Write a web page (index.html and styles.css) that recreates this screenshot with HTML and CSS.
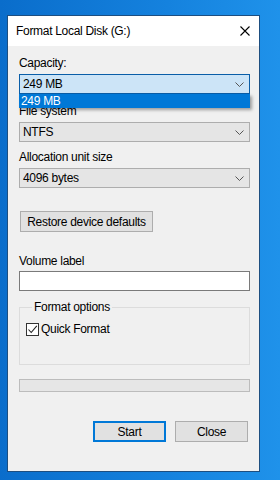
FILE: index.html
```html
<!DOCTYPE html>
<html lang="en">
<head>
    <meta charset="UTF-8">
    <meta name="viewport" content="width=device-width, initial-scale=1.0">
    <title>Format Local Disk (G:)</title>
    <link rel="stylesheet" href="styles.css">
</head>
<body>
    <div class="window">
        <div class="titlebar">
            <span class="title">Format Local Disk (G:)</span>
            <svg class="close" width="10" height="10" viewBox="0 0 10 10">
                <path d="M0.5 0.5 L9.5 9.5 M9.5 0.5 L0.5 9.5" stroke="#000" stroke-width="1.1" fill="none"/>
            </svg>
        </div>

        <div class="content">
            <div class="field capacity">
                <div class="label">Capacity:</div>
                <div class="combo focused">
                    <span>249 MB</span>
                    <svg class="chevron" width="9" height="5" viewBox="0 0 9 5"><path d="M0.5 0.5 L4.5 4.5 L8.5 0.5" stroke="#555" fill="none"/></svg>
                </div>
                <div class="droplist">
                    <div class="option">249 MB</div>
                </div>
            </div>

            <div class="field filesystem">
                <div class="label">File system</div>
                <div class="combo">
                    <span>NTFS</span>
                    <svg class="chevron" width="9" height="5" viewBox="0 0 9 5"><path d="M0.5 0.5 L4.5 4.5 L8.5 0.5" stroke="#555" fill="none"/></svg>
                </div>
            </div>

            <div class="field allocation">
                <div class="label">Allocation unit size</div>
                <div class="combo">
                    <span>4096 bytes</span>
                    <svg class="chevron" width="9" height="5" viewBox="0 0 9 5"><path d="M0.5 0.5 L4.5 4.5 L8.5 0.5" stroke="#555" fill="none"/></svg>
                </div>
            </div>

            <button class="btn restore">Restore device defaults</button>

            <div class="field volume">
                <div class="label">Volume label</div>
                <input class="textbox" type="text">
            </div>

            <fieldset class="options">
                <legend>Format options</legend>
                <label class="check">
                    <span class="box">
                        <svg width="11" height="11" viewBox="0 0 11 11"><path d="M1.5 5.5 L4.2 8.5 L9.8 1.8" stroke="#222" stroke-width="1.1" fill="none"/></svg>
                    </span>
                    Quick Format
                </label>
            </fieldset>

            <div class="progress"></div>

            <div class="actions">
                <button class="btn primary">Start</button>
                <button class="btn">Close</button>
            </div>
        </div>
    </div>
</body>
</html>
```

FILE: styles.css
```css
body {
    margin: 0;
    height: 480px;
    padding: 15px 0 0 7px;
    box-sizing: border-box;
    overflow: hidden;
    background: linear-gradient(90deg, #0a6dcb 0%, #1582de 60%, #1f92ea 100%);
    font-family: "Liberation Sans", Arial, sans-serif;
    font-size: 12px;
    color: #000;
}
.window {
    width: 253px;
    border: 1px solid #1d4e80;
    background-color: #f0f0f0;
    box-sizing: border-box;
}
.titlebar {
    height: 30px;
    background-color: #fff;
    display: flex;
    align-items: center;
    justify-content: space-between;
    padding: 0 9px 0 8px;
}
.title {
    font-size: 12px;
    letter-spacing: -0.3px;
}
.close {
    display: block;
}
.content {
    display: flex;
    flex-direction: column;
    padding: 10px 9px 29px 11px;
}
.label {
    line-height: 15px;
    margin-bottom: 3px;
    letter-spacing: -0.3px;
}
.field {
    position: relative;
}
.filesystem {
    margin-top: 10px;
}
.allocation {
    margin-top: 8px;
}
.combo {
    height: 20px;
    box-sizing: border-box;
    border: 1px solid #adadad;
    background-color: #e5e5e5;
    display: flex;
    align-items: center;
    justify-content: space-between;
    padding: 0 5px 0 3px;
    letter-spacing: -0.3px;
}
.combo.focused {
    background-color: #cce4f7;
    border-color: #0a5ea8;
}
.chevron {
    display: block;
}
.droplist {
    position: absolute;
    top: 100%;
    left: 0;
    right: 0;
    background-color: #0078d7;
    box-shadow: 2px 2px 3px rgba(0, 0, 0, 0.35);
    z-index: 2;
}
.option {
    height: 14px;
    line-height: 14px;
    padding-left: 2px;
    color: #fff;
    letter-spacing: -0.3px;
}
.btn {
    height: 21px;
    margin: 0;
    padding: 0;
    border: 1px solid #adadad;
    background-color: #e1e1e1;
    font-family: inherit;
    font-size: 12px;
    color: #000;
    letter-spacing: -0.3px;
}
.restore {
    align-self: flex-start;
    width: 133px;
    margin: 23px 0 0 1px;
}
.volume {
    margin-top: 22px;
}
.volume .label {
    margin-bottom: 2px;
}
.textbox {
    display: block;
    width: 100%;
    height: 20px;
    box-sizing: border-box;
    margin: 0;
    border: 1px solid #7a7a7a;
    background-color: #fff;
}
.options {
    margin: 9px 0 0;
    padding: 8px 6px 28px;
    border: 1px solid #dcdcdc;
    min-width: 0;
}
.options legend {
    padding: 0 2px;
    margin-left: 6px;
    line-height: 15px;
    letter-spacing: -0.3px;
}
.check {
    display: flex;
    align-items: center;
    gap: 2px;
    height: 13px;
    line-height: 13px;
    letter-spacing: -0.3px;
}
.box {
    width: 13px;
    height: 13px;
    box-sizing: border-box;
    border: 1px solid #333;
    background-color: #fff;
    display: flex;
    align-items: center;
    justify-content: center;
}
.box svg {
    display: block;
}
.progress {
    margin-top: 14px;
    height: 13px;
    box-sizing: border-box;
    border: 1px solid #bcbcbc;
    background-color: #e6e6e6;
}
.actions {
    display: flex;
    justify-content: flex-end;
    gap: 9px;
    margin-top: 29px;
    padding-right: 2px;
}
.actions .btn {
    width: 73px;
}
.btn.primary {
    border: 2px solid #0078d7;
}
```
